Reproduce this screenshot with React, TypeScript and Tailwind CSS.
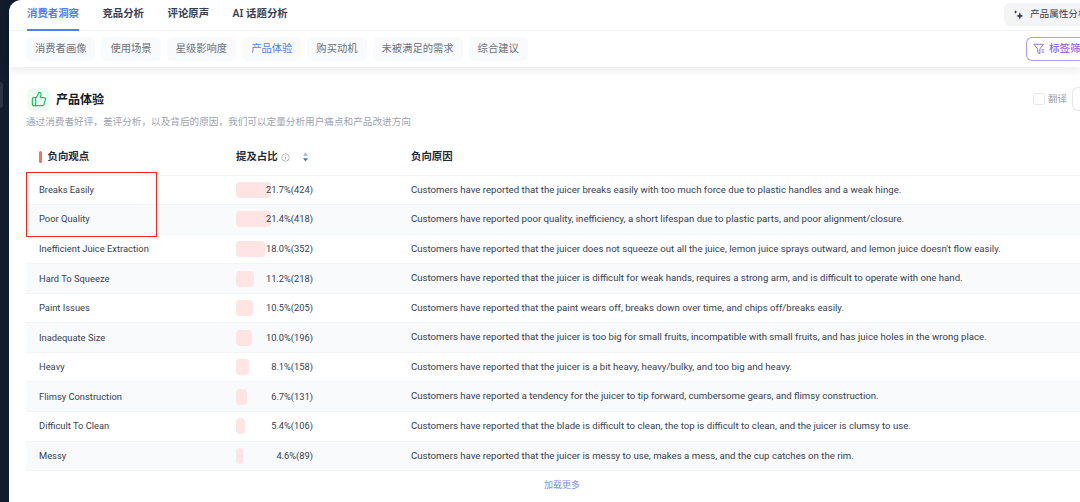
import { ThumbsUp } from 'lucide-react';

const mainTabs = ['消费者洞察', '竞品分析', '评论原声', 'AI 话题分析'];
const subTabs = ['消费者画像', '使用场景', '星级影响度', '产品体验', '购买动机', '未被满足的需求', '综合建议'];

const rows = [
  { name: 'Breaks Easily', pct: 21.7, count: 424, reason: 'Customers have reported that the juicer breaks easily with too much force due to plastic handles and a weak hinge.' },
  { name: 'Poor Quality', pct: 21.4, count: 418, reason: 'Customers have reported poor quality, inefficiency, a short lifespan due to plastic parts, and poor alignment/closure.' },
  { name: 'Inefficient Juice Extraction', pct: 18.0, count: 352, reason: "Customers have reported that the juicer does not squeeze out all the juice, lemon juice sprays outward, and lemon juice doesn't flow easily." },
  { name: 'Hard To Squeeze', pct: 11.2, count: 218, reason: 'Customers have reported that the juicer is difficult for weak hands, requires a strong arm, and is difficult to operate with one hand.' },
  { name: 'Paint Issues', pct: 10.5, count: 205, reason: 'Customers have reported that the paint wears off, breaks down over time, and chips off/breaks easily.' },
  { name: 'Inadequate Size', pct: 10.0, count: 196, reason: 'Customers have reported that the juicer is too big for small fruits, incompatible with small fruits, and has juice holes in the wrong place.' },
  { name: 'Heavy', pct: 8.1, count: 158, reason: 'Customers have reported that the juicer is a bit heavy, heavy/bulky, and too big and heavy.' },
  { name: 'Flimsy Construction', pct: 6.7, count: 131, reason: 'Customers have reported a tendency for the juicer to tip forward, cumbersome gears, and flimsy construction.' },
  { name: 'Difficult To Clean', pct: 5.4, count: 106, reason: 'Customers have reported that the blade is difficult to clean, the top is difficult to clean, and the juicer is clumsy to use.' },
  { name: 'Messy', pct: 4.6, count: 89, reason: 'Customers have reported that the juicer is messy to use, makes a mess, and the cup catches on the rim.' },
];

export default function App() {
  return (
    <div className="relative flex h-[502px] w-[1080px] overflow-hidden bg-[#111c2c] font-['Noto_Sans','Noto_Sans_CJK_SC',sans-serif] text-[#374151]">
      {/* sidebar sliver */}
      <div className="w-[9px] shrink-0 pt-[82px]">
        <div className="h-[26px] w-[3px] rounded-r bg-[#2b3544]" />
      </div>

      <div className="flex min-w-0 flex-1 flex-col rounded-tl-xl bg-white">
        {/* tabs */}
        <div className="relative z-10 shadow-[0_4px_10px_rgba(0,0,0,0.08)]">
          <div className="flex h-[31px] items-start justify-between border-b border-[#f3f4f6] pl-[18px]">
            <div className="flex gap-[23.5px]">
              {mainTabs.map((t, i) => (
                <div
                  key={t}
                  className={`h-[31px] whitespace-nowrap pt-[4px] text-[10.4px] font-semibold leading-[18px] ${i === 0 ? 'border-b-2 border-[#4f7dff] text-[#4f7dff]' : 'text-[#374151]'}`}
                >
                  {t}
                </div>
              ))}
            </div>
            <div className="mt-[3px] flex h-[23px] w-[76px] shrink-0 items-center gap-[6px] overflow-hidden rounded-l-md bg-[#f3f4f6] pl-[9px] text-[9.6px] whitespace-nowrap">
              <svg viewBox="0 0 12 12" className="h-[11px] w-[11px] shrink-0 fill-[#374151]">
                <path d="M7.5 3.5 8.6 6.4 11.3 7.5 8.6 8.6 7.5 11.5 6.4 8.6 3.7 7.5 6.4 6.4Z" />
                <path d="M2.8 1 3.4 2.6 5 3.2 3.4 3.8 2.8 5.4 2.2 3.8.6 3.2 2.2 2.6Z" />
              </svg>
              <span>产品属性分析</span>
            </div>
          </div>
          <div className="flex h-[36px] items-center justify-between pl-[17px]">
            <div className="flex gap-[6px]">
              {subTabs.map((t) => (
                <div
                  key={t}
                  className={`flex h-[24px] items-center whitespace-nowrap rounded-md bg-[#f9fafb] px-[9px] text-[10.3px] ${t === '产品体验' ? 'text-[#4f7dff]' : 'text-[#6b7280]'}`}
                >
                  {t}
                </div>
              ))}
            </div>
            <div className="flex h-[24px] w-[54px] shrink-0 items-center gap-[4px] overflow-hidden rounded-l-md border border-r-0 border-[#b79af5] pl-[6px] text-[10.5px] font-medium whitespace-nowrap text-[#9263ee]">
              <svg viewBox="0 0 14 14" className="h-[12px] w-[12px] shrink-0 fill-none stroke-[#9263ee] stroke-[1.1]">
                <path d="M1 1.5h11L8 7v5.5L5.5 11V7Z" />
                <path d="M10 8h3M10 10.5h3" />
              </svg>
              <span>标签筛选</span>
            </div>
          </div>
        </div>

        {/* content */}
        <div className="flex-1 pl-[17px] pt-[20px]">
          <div className="flex items-center justify-between">
            <div className="flex items-center gap-[6px] pl-[1px]">
              <div className="flex h-[23px] w-[23px] items-center justify-center rounded-md bg-[#ecfdf3]">
                <ThumbsUp size={16} strokeWidth={1.8} className="text-[#22c16b]" />
              </div>
              <h1 className="pt-[1px] text-[12px] font-bold leading-none text-[#111827]">产品体验</h1>
            </div>
            <div className="flex items-center">
              <div className="h-[12px] w-[12px] rounded-[3px] border border-[#e5e7eb]" />
              <span className="ml-[3px] text-[9.5px] text-[#9ca3af]">翻译</span>
              <div className="ml-[5px] h-[24px] w-[8px] rounded-l-md border border-r-0 border-[#e5e7eb]" />
            </div>
          </div>
          <p className="mt-[4px] text-[9.65px] leading-[14px] whitespace-nowrap text-[#9ca3af]">
            通过消费者好评，差评分析，以及背后的原因，我们可以定量分析用户痛点和产品改进方向
          </p>

          {/* table head */}
          <div className="mt-[11px] flex h-[35.6px] items-center border-b border-[#f3f4f6] text-[10.4px] font-bold text-[#1f2937]">
            <div className="flex w-[210px] items-center gap-[6px] pl-[13px]">
              <span className="h-[12px] w-[2.5px] rounded-sm bg-[#f87060]" />
              负向观点
            </div>
            <div className="flex w-[175px] items-center">
              提及占比
              <svg viewBox="0 0 12 12" className="ml-[3px] h-[9px] w-[9px] fill-none stroke-[#9ca3af]">
                <circle cx="6" cy="6" r="5" />
                <path d="M6 5.2v3.4M6 3.2v1" />
              </svg>
              <svg viewBox="0 0 8 12" className="ml-[12px] h-[10px] w-[7px]">
                <path d="M4 0.5 7 4.5H1Z" fill="#9db4e8" />
                <path d="M4 11.5 1 7.5H7Z" fill="#3b6ff5" />
              </svg>
            </div>
            <div>负向原因</div>
          </div>

          {/* rows */}
          {rows.map((r, i) => (
            <div
              key={r.name}
              className={`flex h-[29.55px] items-center border-b border-[#f3f4f6] font-['Roboto',sans-serif] text-[9.64px] whitespace-nowrap text-[#374151] ${i % 2 === 1 ? 'bg-[#f9fafb]' : ''}`}
            >
              <div className="w-[210px] pl-[13px] text-[9.35px]">{r.name}</div>
              <div className="relative flex h-[16px] w-[77px] items-center justify-end text-[9.3px]">
                <div className="absolute left-0 top-0 h-full rounded-sm bg-[#ffe4e4]" style={{ width: r.pct * 1.63 }} />
                <span className="relative">{r.pct.toFixed(1)}%({r.count})</span>
              </div>
              <div className="ml-[98px]">{r.reason}</div>
            </div>
          ))}

          <div className="mt-[5px] w-[1071px] pr-[517px] pt-[2px] text-right text-[9px] leading-[14px] text-[#7b93f5]">加载更多</div>
        </div>
      </div>

      {/* red annotation box */}
      <div className="absolute left-[26px] top-[172px] h-[65px] w-[131px] border border-[#f5261b]" />
    </div>
  );
}
